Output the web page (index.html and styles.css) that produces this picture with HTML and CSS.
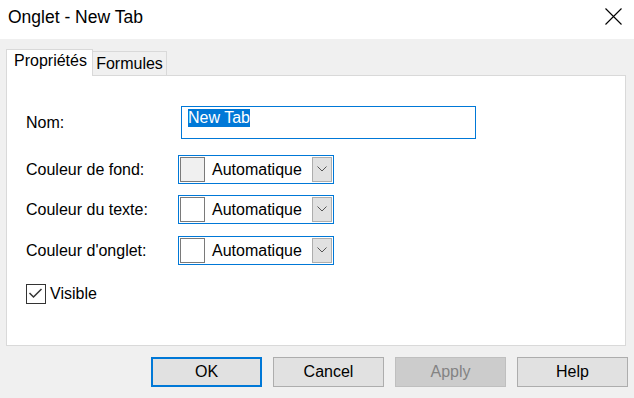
FILE: index.html
```html
<!DOCTYPE html>
<html lang="fr">
<head>
<meta charset="utf-8">
<title>Onglet - New Tab</title>
<link rel="stylesheet" href="styles.css">
</head>
<body>
<div class="window">
  <div class="titlebar">
    <span class="title">Onglet - New Tab</span>
    <span class="close" aria-label="Fermer">
      <svg width="17" height="17" viewBox="0 0 17 17"><path d="M0.5 0.5 L16.5 16.5 M16.5 0.5 L0.5 16.5" stroke="#000" stroke-width="1.1" fill="none"/></svg>
    </span>
  </div>
  <div class="content">
    <div class="tabs">
      <div class="tab active">Propriétés</div>
      <div class="tab">Formules</div>
    </div>
    <div class="panel">
      <div class="row">
        <span class="label">Nom:</span>
        <div class="textbox"><span class="sel">New Tab</span></div>
      </div>
      <div class="row row-first-color">
        <span class="label">Couleur de fond:</span>
        <div class="combo">
          <span class="swatch swatch-gray"></span>
          <span class="combo-text">Automatique</span>
          <span class="drop"><svg width="10" height="6" viewBox="0 0 10 6"><polyline points="0.5,0.5 5,5 9.5,0.5" fill="none" stroke="#555" stroke-width="1"/></svg></span>
        </div>
      </div>
      <div class="row">
        <span class="label">Couleur du texte:</span>
        <div class="combo">
          <span class="swatch"></span>
          <span class="combo-text">Automatique</span>
          <span class="drop"><svg width="10" height="6" viewBox="0 0 10 6"><polyline points="0.5,0.5 5,5 9.5,0.5" fill="none" stroke="#555" stroke-width="1"/></svg></span>
        </div>
      </div>
      <div class="row row-third-color">
        <span class="label">Couleur d'onglet:</span>
        <div class="combo">
          <span class="swatch"></span>
          <span class="combo-text">Automatique</span>
          <span class="drop"><svg width="10" height="6" viewBox="0 0 10 6"><polyline points="0.5,0.5 5,5 9.5,0.5" fill="none" stroke="#555" stroke-width="1"/></svg></span>
        </div>
      </div>
      <div class="row row-check">
        <span class="checkbox"><svg width="18" height="18" viewBox="0 0 18 18"><polyline points="2.5,8 6.5,12 14.5,4" fill="none" stroke="#333" stroke-width="1.5"/></svg></span>
        <span class="check-label">Visible</span>
      </div>
    </div>
    <div class="buttons">
      <button class="btn btn-default">OK</button>
      <button class="btn">Cancel</button>
      <button class="btn btn-disabled">Apply</button>
      <button class="btn">Help</button>
    </div>
  </div>
</div>
</body>
</html>
```
FILE: styles.css
```css
html, body {
  margin: 0;
  padding: 0;
}
body {
  background: #f0f0f0;
  font-family: "Liberation Sans", Arial, sans-serif;
  font-size: 16px;
  color: #000;
}
.window {
  width: 634px;
  height: 398px;
  display: flex;
  flex-direction: column;
  overflow: hidden;
}
.titlebar {
  height: 39px;
  background: #fff;
  display: flex;
  align-items: flex-start;
  flex: none;
}
.title {
  font-size: 17.5px;
  line-height: 20px;
  margin-top: 7px;
  margin-left: 8px;
}
.close {
  margin-left: auto;
  margin-right: 12px;
  margin-top: 8px;
  width: 17px;
  height: 17px;
  display: block;
}
.close svg {
  display: block;
}
.content {
  flex: 1;
  display: flex;
  flex-direction: column;
}
.tabs {
  margin-top: 10px;
  padding-left: 6px;
  height: 26px;
  display: flex;
  align-items: flex-end;
  position: relative;
  z-index: 1;
}
.tab {
  box-sizing: border-box;
  border: 1px solid #d9d9d9;
  border-bottom: none;
  line-height: 20px;
  padding-top: 2px;
  text-align: center;
  height: 24px;
  width: 75px;
  margin-left: -1px;
  background: #f0f0f0;
}
.tab.active {
  margin-left: 0;
  width: 87px;
  height: 27px;
  margin-bottom: -1px;
  background: #fff;
  position: relative;
  z-index: 2;
  padding-top: 1px;
  text-align: left;
  padding-left: 7px;
}
.tab.active + .tab {
  margin-left: -1px;
}
.panel {
  box-sizing: border-box;
  margin-left: 6px;
  width: 620px;
  height: 271px;
  background: #fff;
  border: 1px solid #d9d9d9;
  padding: 30px 0 0 19px;
  display: flex;
  flex-direction: column;
  gap: 11px;
}
.row {
  display: flex;
  align-items: center;
}
.row-first-color {
  margin-top: 5px;
}
.row-third-color {
  margin-top: 1px;
}
.row-check {
  margin-top: 8px;
}
.label {
  width: 155px;
  flex: none;
}
.textbox {
  box-sizing: border-box;
  width: 295px;
  height: 33px;
  border: 1px solid #0078d7;
  padding: 2px 0 0 6px;
  display: flex;
  align-items: flex-start;
}
.sel {
  background: #0078d7;
  color: #fff;
  line-height: 18px;
  height: 18px;
}
.combo {
  box-sizing: border-box;
  margin-left: -3px;
  width: 156px;
  height: 29px;
  border: 1px solid #0078d7;
  padding: 1px;
  display: flex;
  align-items: center;
}
.swatch {
  box-sizing: border-box;
  width: 25px;
  height: 25px;
  border: 1px solid #7a7a7a;
  background: #fff;
  flex: none;
}
.swatch-gray {
  background: #f0f0f0;
}
.combo-text {
  flex: 1;
  padding-left: 7px;
  white-space: nowrap;
}
.drop {
  box-sizing: border-box;
  width: 20px;
  height: 25px;
  background: #e1e1e1;
  border: 1px solid #adadad;
  display: flex;
  align-items: center;
  justify-content: center;
  flex: none;
}
.drop svg {
  display: block;
  margin-top: -1px;
}
.checkbox {
  box-sizing: border-box;
  width: 20px;
  height: 20px;
  border: 1px solid #333;
  display: flex;
  align-items: center;
  justify-content: center;
  background: #fff;
}
.checkbox svg {
  display: block;
}
.check-label {
  margin-left: 4px;
}
.buttons {
  margin-top: 11px;
  display: flex;
  justify-content: flex-end;
  gap: 11px;
  padding-right: 6px;
}
.btn {
  box-sizing: border-box;
  width: 111px;
  height: 30px;
  background: #e1e1e1;
  border: 1px solid #adadad;
  font-family: "Liberation Sans", Arial, sans-serif;
  font-size: 16px;
  color: #000;
  padding: 0;
  margin: 0;
}
.btn-default {
  border: 2px solid #0078d7;
}
.btn-disabled {
  background: #cccccc;
  border-color: #bfbfbf;
  color: #838383;
}
```
